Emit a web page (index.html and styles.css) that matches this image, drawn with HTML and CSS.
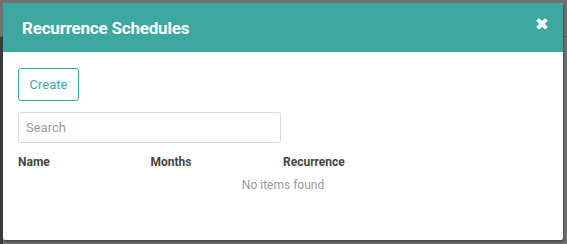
FILE: index.html
```html
<!DOCTYPE html>
<html>
<head>
    <title>Recurrence Schedules</title>
    <meta charset="utf-8">
    <link rel="stylesheet" href="styles.css">
</head>
<body>
    <!-- 背景页面（被遮罩覆盖） -->
    <div class="backdrop">
        <div class="page-bar"></div>
        <div class="page-side"></div>
    </div>

    <!-- 弹窗 -->
    <div class="modal">
        <div class="modal-header">
            <h2 class="modal-title">Recurrence Schedules</h2>
            <span class="modal-close">&#x2716;</span>
        </div>
        <div class="modal-body">
            <button class="btn-create">Create</button>
            <input class="search" type="text" placeholder="Search">
            <table class="list">
                <thead>
                    <tr>
                        <th>Name</th>
                        <th>Months</th>
                        <th>Recurrence</th>
                        <th></th>
                    </tr>
                </thead>
                <tbody>
                    <tr>
                        <td colspan="4" class="empty">No items found</td>
                    </tr>
                </tbody>
            </table>
        </div>
    </div>
</body>
</html>
```

FILE: styles.css
```css
body, html {
    margin: 0;
    padding: 0;
    width: 100%;
    height: 100%;
    overflow: hidden;
    font-family: Roboto, 'Liberation Sans', sans-serif;
    background: #717171;
}

.backdrop {
    position: absolute;
    inset: 0;
}

.page-bar {
    height: 36px;
    border-bottom: 1px solid #5a5a5a;
}

.page-side {
    width: 3px;
    height: 208px;
    background: #3a3a3a;
}

.modal {
    position: absolute;
    left: 3px;
    top: 3px;
    width: 560px;
    height: 237px;
    background: #fff;
    border-radius: 2px;
    box-shadow: 1px 2px 2px rgba(0,0,0,0.35);
    overflow: hidden;
}

.modal-header {
    display: flex;
    align-items: center;
    justify-content: space-between;
    height: 49px;
    padding: 0 14px 0 19px;
    background: #3da89f;
}

.modal-title {
    margin: 0;
    color: #fff;
    font-size: 17px;
    font-weight: bold;
    letter-spacing: -0.2px;
}

.modal-close {
    color: #fff;
    font-size: 17px;
    font-family: 'DejaVu Sans', sans-serif;
    margin-top: -8px;
}

.modal-body {
    display: flex;
    flex-direction: column;
    align-items: flex-start;
    padding: 16px 15px 0 15px;
}

.btn-create {
    width: 61px;
    height: 33px;
    padding: 0;
    background: #fff;
    border: 1px solid #3da89f;
    border-radius: 3px;
    color: #3da89f;
    font-family: Roboto, sans-serif;
    font-size: 13px;
}

.search {
    box-sizing: border-box;
    width: 263px;
    height: 31px;
    margin-top: 11px;
    padding: 0 7px;
    border: 1px solid #dadada;
    border-radius: 3px;
    font-family: Roboto, sans-serif;
    font-size: 13px;
    outline: none;
}

.search::placeholder {
    color: #9a9a9a;
}

.list {
    width: 100%;
    margin-top: 11px;
    border-collapse: collapse;
    table-layout: fixed;
}

.list th {
    padding: 0;
    height: 16px;
    text-align: left;
    font-size: 12px;
    font-weight: bold;
    color: #454545;
}

.list td.empty {
    padding: 8px 0 0 0;
    text-align: center;
    font-size: 12px;
    color: #9a9a9a;
}
```
